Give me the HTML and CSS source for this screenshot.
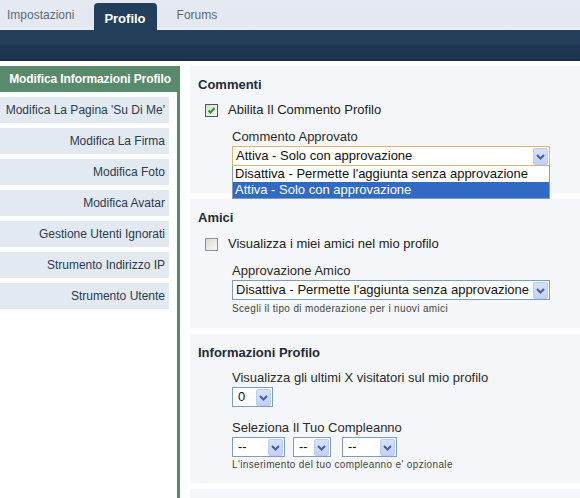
FILE: index.html
```html
<!DOCTYPE html>
<html lang="it">
<head>
<meta charset="utf-8">
<title>Profilo</title>
<link rel="stylesheet" href="styles.css">
</head>
<body>
<div class="topbar">
  <div class="tabs">
    <span class="tab">Impostazioni</span>
    <span class="tab active">Profilo</span>
    <span class="tab">Forums</span>
  </div>
</div>
<div class="band"></div>
<div class="main">
  <div class="sidebar">
    <div class="side-head">Modifica Informazioni Profilo</div>
    <div class="side-item">Modifica La Pagina 'Su Di Me'</div>
    <div class="side-item">Modifica La Firma</div>
    <div class="side-item">Modifica Foto</div>
    <div class="side-item">Modifica Avatar</div>
    <div class="side-item">Gestione Utenti Ignorati</div>
    <div class="side-item">Strumento Indirizzo IP</div>
    <div class="side-item">Strumento Utente</div>
  </div>
  <div class="content">
    <div class="section sec-comments">
      <div class="sec-title">Commenti</div>
      <div class="check-row">
        <span class="cb checked"><svg width="9" height="9" viewBox="0 0 9 9"><path d="M1.5 4.5 L3.5 6.5 L7.5 2" fill="none" stroke="#21a121" stroke-width="2"/></svg></span>
        <span class="cb-label">Abilita Il Commento Profilo</span>
      </div>
      <div class="field">
        <div class="field-label">Commento Approvato</div>
        <div class="select-wrap">
          <div class="select wide focused">
            <span class="sel-text">Attiva - Solo con approvazione</span>
            <span class="arrow"><svg width="15" height="17" viewBox="0 0 15 17"><path d="M4 7 L7.5 10.5 L11 7" fill="none" stroke="#4d6185" stroke-width="2"/></svg></span>
          </div>
          <div class="droplist">
            <div class="opt">Disattiva - Permette l'aggiunta senza approvazione</div>
            <div class="opt sel">Attiva - Solo con approvazione</div>
          </div>
        </div>
        <div class="help-space"></div>
      </div>
    </div>

    <div class="section sec-amici">
      <div class="sec-title">Amici</div>
      <div class="check-row">
        <span class="cb"></span>
        <span class="cb-label">Visualizza i miei amici nel mio profilo</span>
      </div>
      <div class="field">
        <div class="field-label">Approvazione Amico</div>
        <div class="select wide">
          <span class="sel-text">Disattiva - Permette l'aggiunta senza approvazione</span>
          <span class="arrow"><svg width="15" height="17" viewBox="0 0 15 17"><path d="M4 7 L7.5 10.5 L11 7" fill="none" stroke="#4d6185" stroke-width="2"/></svg></span>
        </div>
        <div class="help">Scegli il tipo di moderazione per i nuovi amici</div>
      </div>
    </div>

    <div class="section sec-info">
      <div class="sec-title">Informazioni Profilo</div>
      <div class="field">
        <div class="field-label first">Visualizza gli ultimi X visitatori sul mio profilo</div>
        <div class="select s-num">
          <span class="sel-text">0</span>
          <span class="arrow"><svg width="15" height="17" viewBox="0 0 15 17"><path d="M4 7 L7.5 10.5 L11 7" fill="none" stroke="#4d6185" stroke-width="2"/></svg></span>
        </div>
        <div class="field-label second">Seleziona Il Tuo Compleanno</div>
        <div class="date-row">
          <div class="select s-d1">
            <span class="sel-text">--</span>
            <span class="arrow"><svg width="15" height="17" viewBox="0 0 15 17"><path d="M4 7 L7.5 10.5 L11 7" fill="none" stroke="#4d6185" stroke-width="2"/></svg></span>
          </div>
          <div class="select s-d2">
            <span class="sel-text">--</span>
            <span class="arrow"><svg width="15" height="17" viewBox="0 0 15 17"><path d="M4 7 L7.5 10.5 L11 7" fill="none" stroke="#4d6185" stroke-width="2"/></svg></span>
          </div>
          <div class="select s-d3">
            <span class="sel-text">--</span>
            <span class="arrow"><svg width="15" height="17" viewBox="0 0 15 17"><path d="M4 7 L7.5 10.5 L11 7" fill="none" stroke="#4d6185" stroke-width="2"/></svg></span>
          </div>
        </div>
        <div class="help">L'inserimento del tuo compleanno e' opzionale</div>
      </div>
    </div>

    <div class="section sec-last"></div>
  </div>
</div>
</body>
</html>
```

FILE: styles.css
```css
* { box-sizing: border-box; }
html, body { margin: 0; padding: 0; background: #ffffff; }
body {
  width: 580px;
  height: 498px;
  overflow: hidden;
  font-family: "Liberation Sans", Arial, sans-serif;
  font-size: 13px;
  color: #222;
}

.topbar {
  height: 30px;
  background: linear-gradient(#e5e9f2, #e4e9f1 85%, #e9edf3);
}
.tabs {
  display: flex;
  align-items: flex-end;
  height: 30px;
  padding-left: 7px;
}
.tab {
  font-size: 12px;
  color: #5a6a7e;
  margin-right: 20px;
  line-height: 14px;
  padding-bottom: 8px;
}
.tab.active {
  background: #243f5c;
  color: #ffffff;
  font-weight: bold;
  font-size: 13px;
  height: 27px;
  line-height: 27px;
  padding: 2px 11px 0 10px;
  border-radius: 4px 4px 0 0;
}

.band {
  height: 31px;
  background: linear-gradient(#243f5c 0, #243f5c 40%, #1f3752 52%, #1e3550 92%, #1a2b3f 100%);
}

.main {
  display: flex;
  align-items: stretch;
  padding-top: 5px;
}

.sidebar {
  width: 180px;
  flex: none;
  border-right: 3px solid #5a8a6c;
  min-height: 432px;
}
.side-head {
  height: 26px;
  line-height: 26px;
  background: #5a8a6c;
  color: #ffffff;
  font-weight: bold;
  font-size: 12px;
  letter-spacing: -0.1px;
  text-align: right;
  padding-right: 6px;
  margin-bottom: 5px;
}
.side-item {
  width: 169px;
  height: 26px;
  line-height: 26px;
  background: #e3e9f1;
  color: #2b3a50;
  font-size: 12px;
  text-align: right;
  padding-right: 4px;
  margin-bottom: 5px;
}

.content {
  flex: 1;
  margin-left: 10px;
}

.section {
  background: #f4f6f9;
  padding: 11px 0 12px 8px;
  margin-bottom: 6px;
}
.sec-amici { padding-bottom: 13px; }
.sec-amici .check-row { margin-top: 10px; }
.sec-last { height: 20px; padding: 0; }

.sec-title {
  font-weight: bold;
  font-size: 13px;
  line-height: 16px;
  height: 16px;
  color: #1f2b3a;
}

.check-row {
  display: flex;
  align-items: center;
  height: 16px;
  margin-top: 9px;
  margin-left: 7px;
}
.cb {
  width: 13px;
  height: 13px;
  border: 1px solid #8a939c;
  background: linear-gradient(135deg, #dcdcd4, #f8f8f4);
  display: flex;
  align-items: center;
  justify-content: center;
  margin-right: 10px;
}
.cb.checked { border-color: #4b5b66; }
.cb-label { font-size: 13px; color: #222; line-height: 16px; }

.field { margin-left: 34px; }
.field-label {
  font-size: 13px;
  line-height: 16px;
  color: #2a2a2a;
  margin-top: 11px;
}
.field-label.first { margin-top: 9px; }
.field-label.second { margin-top: 13px; }

.select-wrap { position: relative; width: 318px; margin-top: 1px; }
.select-wrap .select { margin-top: 0; }

.select {
  position: relative;
  height: 20px;
  margin-top: 1px;
  border: 1px solid #7f9db9;
  background: #ffffff;
  display: flex;
  align-items: center;
  justify-content: space-between;
}
.select.wide { width: 318px; }
.select.focused { border-color: #d8b86c; }
.sel-text {
  padding-left: 3px;
  font-size: 13px;
  line-height: 18px;
  color: #111;
  white-space: nowrap;
}
.arrow {
  width: 15px;
  height: 17px;
  margin-right: 1px;
  border: 1px solid #bccdf3;
  border-radius: 2px;
  background: linear-gradient(#d6e2fd, #bfd1f8);
  display: flex;
  align-items: center;
  justify-content: center;
  flex: none;
}
.arrow svg { display: block; margin: -1px; }

.s-num { width: 41px; }
.s-d1 { width: 53px; }
.s-d2 { width: 38px; }
.s-d3 { width: 55px; }
.s-num .sel-text, .s-d1 .sel-text, .s-d2 .sel-text, .s-d3 .sel-text { padding-left: 5px; }

.date-row {
  display: flex;
  gap: 8px;
  margin-top: 1px;
}
.date-row .select { margin-top: 0; }
.date-row .s-d3 { margin-left: 3px; }

.droplist {
  position: absolute;
  left: 0;
  top: 20px;
  width: 318px;
  background: #ffffff;
  border: 1px solid #7f9db9;
  border-top: none;
  z-index: 5;
}
.opt {
  height: 16px;
  line-height: 16px;
  font-size: 13px;
  padding-left: 2px;
  color: #111;
  white-space: nowrap;
}
.opt.sel { background: #316ac5; color: #ffffff; }

.help-space { height: 15px; }
.help {
  margin-top: 3px;
  font-size: 10px;
  line-height: 12px;
  letter-spacing: 0.35px;
  color: #444;
}
.sec-info .help { margin-top: 2px; }
```
